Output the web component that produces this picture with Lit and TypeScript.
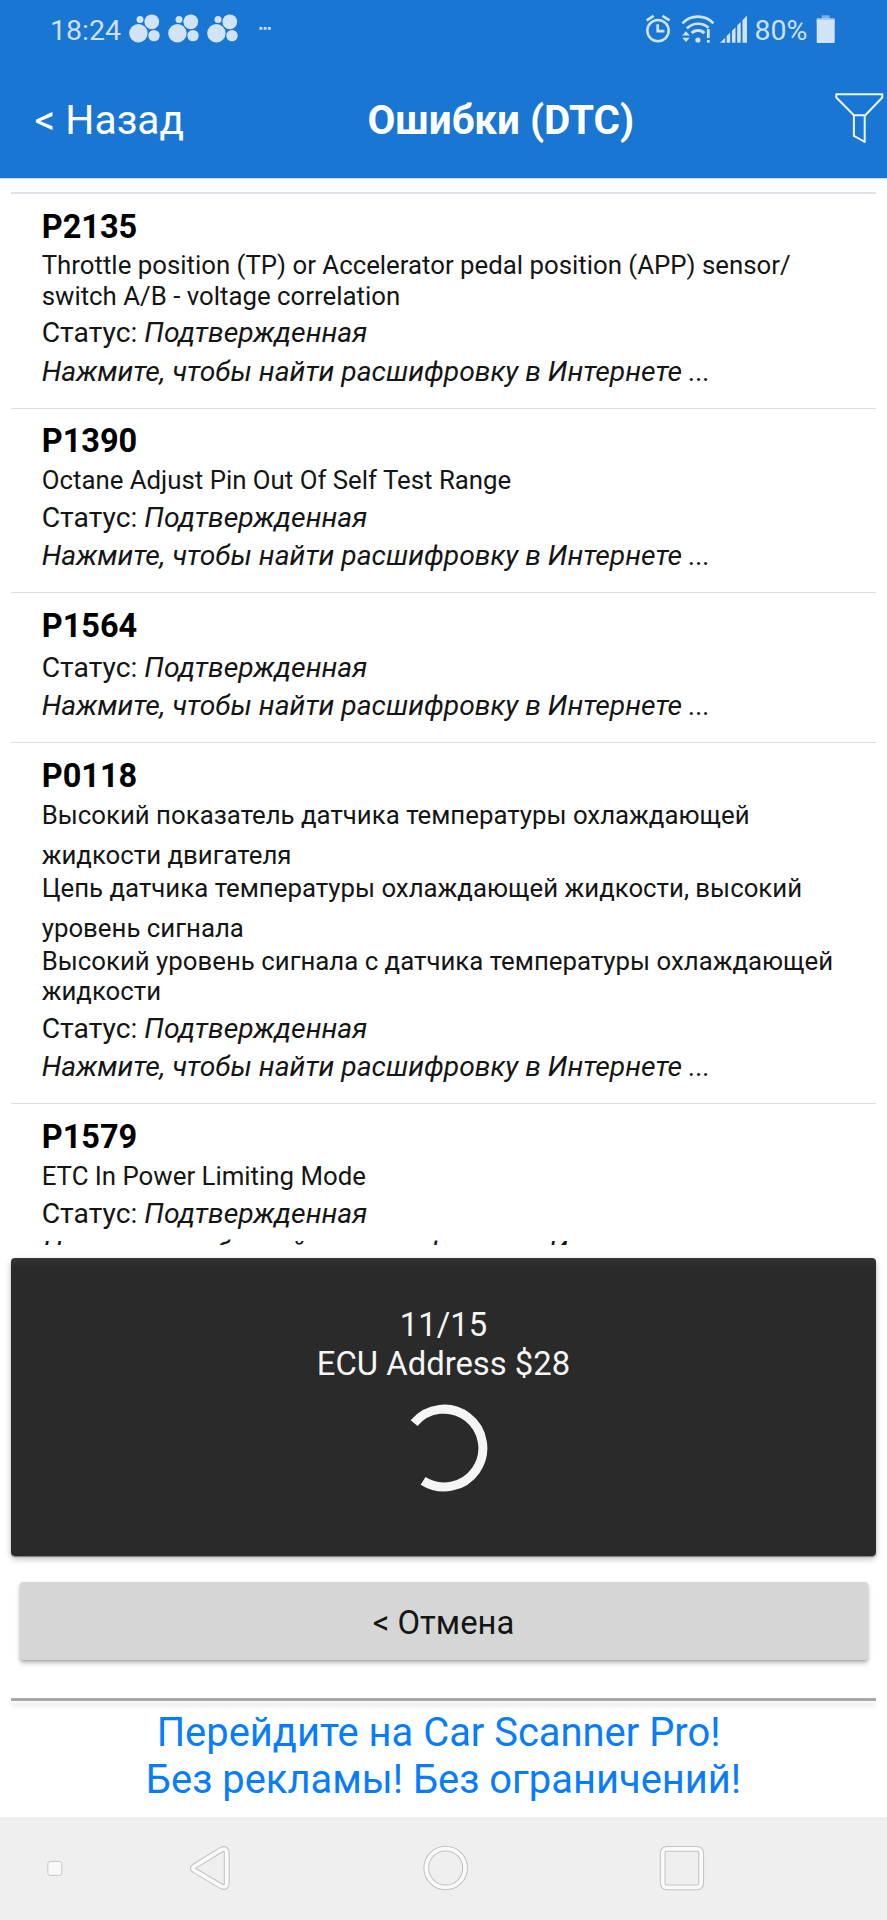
import { LitElement, html, css, svg } from "lit";
import { customElement, property } from "lit/decorators.js";

interface Trouble {
  code: string;
  lines: string[][];
}

const TROUBLES: Trouble[] = [
  {
    code: "P2135",
    lines: [["Throttle position (TP) or Accelerator pedal position (APP) sensor/"], ["switch A/B - voltage correlation"]],
  },
  { code: "P1390", lines: [["Octane Adjust Pin Out Of Self Test Range"]] },
  { code: "P1564", lines: [] },
  {
    code: "P0118",
    lines: [
      ["Высокий показатель датчика температуры охлаждающей", "жидкости двигателя"],
      ["Цепь датчика температуры охлаждающей жидкости, высокий", "уровень сигнала"],
      ["Высокий уровень сигнала с датчика температуры охлаждающей"],
      ["жидкости"],
    ],
  },
  { code: "P1579", lines: [["ETC In Power Limiting Mode"]] },
];

@customElement("status-bar")
class StatusBar extends LitElement {
  static styles = css`
    :host {
      display: flex;
      height: 60px;
      box-sizing: border-box;
      padding: 0 52px 0 50px;
      color: #cde0f5;
      font-size: 28.5px;
      line-height: 34px;
    }
    .text { padding-top: 14px; white-space: nowrap; }
    .bubbles { display: flex; gap: 7.8px; margin-left: 8.4px; }
    .space { flex: 1; }
    svg { display: block; fill: #d1e3f6; flex: none; }
    .pct { width: 61.5px; }
  `;
  render() {
    return html`
      <span class="text">18:24</span>
      <span class="bubbles">
        ${[0, 1, 2].map(
          () => html`<svg width="31" height="60" viewBox="129 0 31 60">
            <circle cx="138.4" cy="33.3" r="9.2" /><circle cx="151.8" cy="21.8" r="7.4" />
            <circle cx="140" cy="19.6" r="3.5" /><circle cx="154" cy="35.6" r="5.7" />
          </svg>`
        )}
      </span>
      <svg width="40" height="60" viewBox="238 0 40 60">
        <path d="M259.5 27h2.8v2.8h-2.8zM263.7 27h2.8v2.8h-2.8zM267.9 27h2.8v2.8h-2.8z" />
      </svg>
      <span class="space"></span>
      <svg width="110.5" height="60" viewBox="644.3 0 110.5 60">
        <g fill="none" stroke="#d1e3f6">
          <circle cx="658.3" cy="30.6" r="10.7" stroke-width="2.5" />
          <path d="M658 24.3v6.8h6.7" stroke-width="2.7" />
          <path d="M647 20.3l7-4.4M669.8 20.3l-7-4.4" stroke-width="2.7" />
          <path d="M682.7 23.3C691 14.4 705.500 14.400 713.700 23.300" stroke-width="2.7" />
          <path d="M687.300 28.500C692.800 22.300 703 22.300 708.800 27.700" stroke-width="2.7" />
          <path d="M692 33.200C695 29.500 701.500 29.500 704.600 33.200" stroke-width="2.9" />
        </g>
        <circle cx="698.200" cy="40" r="2.600" />
        <path d="M682.500 35.500h7.600l-3.800-4.200zM682.500 37.700h7.600l-3.800 4.200zM707.200 29h2.800v9h-2.800zM707.200 40h2.800v2.700h-2.800z" />
        <path d="M720.300 42.700l5.200-5v5zM727 42.700v-6.600l3.500-3.600v10.200zM732.300 42.700V30.800l3.500-3.500v15.400zM737.500 42.700V25.600l3.500-3.500v20.600zM742.800 42.700V20.300l4.500-4.800v27.200z" />
      </svg>
      <span class="text pct">80%</span>
      <svg width="19" height="60" viewBox="816.300 0 19 60">
        <rect x="822" y="15.300" width="8" height="4" fill="#7db0e6" />
        <rect x="817" y="18.300" width="18" height="4" fill="#a9cbef" />
        <rect x="817" y="20" width="18" height="23" rx="1" />
      </svg>
    `;
  }
}

@customElement("title-bar")
class TitleBar extends LitElement {
  static styles = css`
    :host {
      display: grid;
      grid-template-columns: 34.500px 333px 1fr 52px;
      height: 118px;
      color: #fff;
      font-size: 40.800px;
      line-height: 48px;
    }
    .back { grid-column: 2; padding-top: 36px; font-weight: 400; }
    .title { padding-top: 37px; font-weight: 700; font-size: 40.400px; white-space: nowrap; }
    svg { display: block; }
  `;
  render() {
    return html`
      <span class="back">&lt; Назад</span>
      <span class="title">Ошибки (DTC)</span>
      <svg width="52" height="118" viewBox="835 60 52 118" fill="none" stroke="#eef5fd" stroke-width="2" stroke-linejoin="round">
        <path d="M836.300 94.300h46v3.200l-17 17.800h-11.400l-17.600-17.800zM853.900 115.300v20.600l10.800 6V115.300" />
      </svg>
    `;
  }
}

@customElement("trouble-item")
class TroubleItem extends LitElement {
  @property({ attribute: false }) trouble!: Trouble;
  static styles = css`
    :host {
      display: flex;
      flex-direction: column;
      gap: 4.600px;
      box-sizing: border-box;
      padding: 13.500px 0 19.300px 30.700px;
      border-bottom: 1px solid #dedede;
      color: #151515;
      white-space: nowrap;
    }
    .code { font-size: 32.500px; font-weight: 700; line-height: 38.300px; color: #000; }
    .desc { font-size: 25.800px; line-height: 30.200px; }
    .wrapped { display: block; padding: 10.500px 0 2.300px; }
    .status { font-size: 28.300px; line-height: 33.700px; padding-top: 1.100px; }
    .more { font-size: 28.250px; line-height: 33.700px; font-style: italic; }
  `;
  render() {
    const { code, lines } = this.trouble;
    return html`
      <div class="code">${code}</div>
      ${lines.length
        ? html`<div class="desc">
            ${lines.map(
              ([first, rest]) => html`<div>${first}${rest ? html`<span class="wrapped">${rest}</span>` : ""}</div>`
            )}
          </div>`
        : ""}
      <div class="status">Статус: <i>Подтвержденная</i></div>
      <div class="more">Нажмите, чтобы найти расшифровку в Интернете ...</div>
    `;
  }
}

@customElement("progress-panel")
class ProgressPanel extends LitElement {
  static styles = css`
    :host {
      display: flex;
      flex-direction: column;
      align-items: center;
      box-sizing: border-box;
      height: 298px;
      margin: 0 11px;
      padding-top: 48.500px;
      border-radius: 4px;
      background: linear-gradient(#343434, #2a2a2a 9px);
      box-shadow: 0 3px 6px rgba(0, 0, 0, 0.26), 0 1px 1px rgba(0, 0, 0, 0.4);
      color: #f5f5f5;
      font-size: 32.800px;
      line-height: 38.500px;
    }
    svg { display: block; margin-top: 21px; }
  `;
  render() {
    return html`
      <div>11/15</div>
      <div>ECU Address $28</div>
      <svg width="88" height="88" viewBox="-44 -44 88 88" fill="none" stroke="#f5f5f5" stroke-width="9">
        <path d="M-29.900-24.900A38.900 38.900 0 1 1-20.900 32.900" />
      </svg>
    `;
  }
}

@customElement("nav-keys")
class NavKeys extends LitElement {
  static styles = css`
    :host { display: block; height: 103px; background: #efefef; }
    svg { display: block; }
    .edge { fill: none; stroke: #c3c3c3; stroke-width: 5.800; }
    .core { fill: none; stroke: #fafafa; stroke-width: 3.700; }
  `;
  render() {
    const keys = (cls: string) => svg`<g class=${cls} stroke-linejoin="round">
      <path d="M194.300 1866.300L220.500 1850.200Q226.500 1846.800 226.700 1852.800V1883.200Q226.500 1889.200 220.500 1885.800L194.300 1870.300Q191.300 1868.300 194.300 1866.300Z" />
      <circle cx="445.700" cy="1868" r="19.400" />
      <rect x="662.700" y="1848.800" width="38.500" height="38.500" rx="4" />
    </g>`;
    return html`<svg width="887" height="103" viewBox="0 1817 887 103">
      <rect x="47.800" y="1861.400" width="14" height="14" rx="2.500" fill="#f9f9f9" stroke="#c6c6c6" />
      ${keys("edge")}${keys("core")}
    </svg>`;
  }
}

@customElement("app-root")
class AppRoot extends LitElement {
  static styles = css`
    :host {
      display: flex;
      flex-direction: column;
      width: 887px;
      height: 1920px;
      overflow: hidden;
      background: #fff;
      font-family: Roboto, sans-serif;
    }
    .head { height: 178px; flex: none; background: #1976d3; border-bottom: 1px solid #c9d8f2; }
    .list {
      flex: none;
      box-sizing: border-box;
      height: 1053px;
      margin: 13px 11px 12.500px;
      border-top: 2px solid #e1e2e8;
      overflow: hidden;
    }
    progress-panel { flex: none; }
    .cancel {
      flex: none;
      box-sizing: border-box;
      height: 78px;
      margin: 26.500px 19.500px 0;
      padding: 4px 0 0;
      border: 0;
      border-radius: 3px;
      background: #d6d6d6;
      box-shadow: 0 3px 5px rgba(0, 0, 0, 0.28), 0 1px 2px rgba(0, 0, 0, 0.12);
      color: #151515;
      font: 32.800px/74px Roboto, sans-serif;
      text-align: center;
    }
    .rule {
      flex: none;
      height: 3px;
      margin: 38px 11px 0;
      background: #a8a8a8;
      box-shadow: 0 5px 4px rgba(0, 0, 0, 0.1);
    }
    .promo {
      flex: 1;
      padding-top: 7.500px;
      color: #087cff;
      font-size: 39.900px;
      line-height: 47px;
      text-align: center;
      white-space: pre;
    }
    nav-keys { flex: none; }
  `;
  render() {
    return html`
      <header class="head"><status-bar></status-bar><title-bar></title-bar></header>
      <section class="list">
        ${TROUBLES.map((t) => html`<trouble-item .trouble=${t}></trouble-item>`)}
      </section>
      <progress-panel></progress-panel>
      <button class="cancel">&lt; Отмена</button>
      <div class="rule"></div>
      <div class="promo"><div>Перейдите на Car Scanner Pro!&nbsp;</div><div>Без рекламы! Без ограничений!</div></div>
      <nav-keys></nav-keys>
    `;
  }
}
